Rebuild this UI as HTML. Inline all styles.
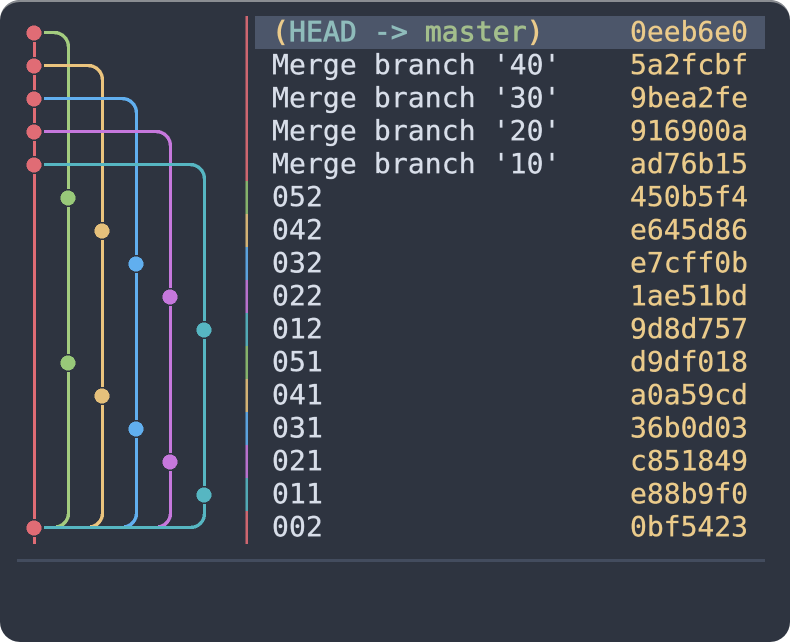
<!DOCTYPE html>
<html><head><meta charset="utf-8">
<style>
html,body{margin:0;padding:0;background:#fff;width:790px;height:642px;overflow:hidden}
#win{position:absolute;left:0;top:0;width:790px;height:642px;background:#2e3440;border-radius:20px;overflow:hidden}
#top{position:absolute;left:0;top:0;width:790px;height:642px;border-radius:20px;box-sizing:border-box;border-top:2px solid #8a8d92;}
#hl{position:absolute;left:255px;top:16px;width:510px;height:33px;background:#4c566a}
#div{position:absolute;left:17px;top:559px;width:748px;height:3px;background:#434c5e}
.r{position:absolute;left:272px;height:33px;margin-top:-1px;letter-spacing:.12px;font:28px/33px "DejaVu Sans Mono","Liberation Mono",monospace;color:#d8dee9;white-space:pre;-webkit-text-stroke:.3px currentColor}
.h{position:absolute;left:630px;height:33px;margin-top:-1px;font:28px/33px "DejaVu Sans Mono","Liberation Mono",monospace;color:#ebcb8b;white-space:pre;-webkit-text-stroke:.3px currentColor}
.b{-webkit-text-stroke:.8px currentColor}
svg{position:absolute;left:0;top:0}
</style></head><body>
<div id="win">
<div id="top"></div>
<div id="hl"></div>
<div id="div"></div>
<svg width="790" height="642" viewBox="0 0 790 642" fill="none" shape-rendering="crispEdges">
<g stroke-width="3.4">
<path d="M54 32.500A14.500 14.500 0 0 1 68.500 47M68.500 514A14 14 0 0 1 56 527" stroke="#a3cc7f"/>
<path d="M88 65.500A14.500 14.500 0 0 1 102.500 80M102.500 514A14 14 0 0 1 90 527" stroke="#ebc47e"/>
<path d="M122 98.500A14.500 14.500 0 0 1 136.500 113M136.500 514A14 14 0 0 1 124 527" stroke="#61afef"/>
<path d="M156 131.500A14.500 14.500 0 0 1 170.500 146M170.500 514A14 14 0 0 1 158 527" stroke="#c678dd"/>
<path d="M190 164.500A14.500 14.500 0 0 1 204.500 179M204.500 513A14 14 0 0 1 190.500 527.500" stroke="#56b6c2"/>
</g>
<g fill="#a3cc7f"><rect x="44" y="31" width="10" height="3"/><rect x="67" y="47" width="3" height="142"/><rect x="67" y="207" width="3" height="147"/><rect x="67" y="372" width="3" height="142"/></g>
<g fill="#ebc47e"><rect x="44" y="64" width="44" height="3"/><rect x="101" y="80" width="3" height="142"/><rect x="101" y="240" width="3" height="147"/><rect x="101" y="405" width="3" height="109"/></g>
<g fill="#61afef"><rect x="44" y="97" width="78" height="3"/><rect x="135" y="113" width="3" height="142"/><rect x="135" y="273" width="3" height="147"/><rect x="135" y="438" width="3" height="76"/></g>
<g fill="#c678dd"><rect x="44" y="130" width="112" height="3"/><rect x="169" y="146" width="3" height="142"/><rect x="169" y="306" width="3" height="147"/><rect x="169" y="471" width="3" height="43"/></g>
<g fill="#56b6c2"><rect x="44" y="163" width="146" height="3"/><rect x="203" y="179" width="3" height="142"/><rect x="203" y="339" width="3" height="147"/><rect x="203" y="504" width="3" height="9"/><rect x="44" y="526" width="147" height="3"/></g>
<g fill="#e06c75"><rect x="33" y="42" width="3" height="15"/><rect x="33" y="75" width="3" height="15"/><rect x="33" y="108" width="3" height="15"/><rect x="33" y="141" width="3" height="15"/><rect x="33" y="174" width="3" height="345"/><rect x="33" y="537" width="3" height="7"/></g>
<g fill="#e06c75"><circle cx="34" cy="33" r="7.500"/><circle cx="34" cy="66" r="7.500"/><circle cx="34" cy="99" r="7.500"/><circle cx="34" cy="132" r="7.500"/><circle cx="34" cy="165" r="7.500"/><circle cx="34" cy="528" r="7.500"/></g>
<g fill="#98c979"><circle cx="68" cy="198" r="7.500"/><circle cx="68" cy="363" r="7.500"/></g>
<g fill="#e5c07b"><circle cx="102" cy="231" r="7.500"/><circle cx="102" cy="396" r="7.500"/></g>
<g fill="#61afef"><circle cx="136" cy="264" r="7.500"/><circle cx="136" cy="429" r="7.500"/></g>
<g fill="#c678dd"><circle cx="170" cy="297" r="7.500"/><circle cx="170" cy="462" r="7.500"/></g>
<g fill="#56b6c2"><circle cx="204" cy="330" r="7.500"/><circle cx="204" cy="495" r="7.500"/></g>
<g opacity=".9" shape-rendering="auto">
<rect x="245.500" y="16" width="2.500" height="165" fill="#e06c75"/>
<rect x="245.500" y="181" width="2.500" height="33" fill="#8fc070"/>
<rect x="245.500" y="214" width="2.500" height="33" fill="#e5c07b"/>
<rect x="245.500" y="247" width="2.500" height="33" fill="#61afef"/>
<rect x="245.500" y="280" width="2.500" height="33" fill="#c678dd"/>
<rect x="245.500" y="313" width="2.500" height="33" fill="#56b6c2"/>
<rect x="245.500" y="346" width="2.500" height="33" fill="#8fc070"/>
<rect x="245.500" y="379" width="2.500" height="33" fill="#e5c07b"/>
<rect x="245.500" y="412" width="2.500" height="33" fill="#61afef"/>
<rect x="245.500" y="445" width="2.500" height="33" fill="#c678dd"/>
<rect x="245.500" y="478" width="2.500" height="33" fill="#56b6c2"/>
<rect x="245.500" y="511" width="2.500" height="33" fill="#e06c75"/>
</g>
</svg>
<div class="r b" style="top:16px"><span style="color:#ebcb8b">(</span><span style="color:#8fbcbb">HEAD -&gt; </span><span style="color:#a3be8c">master</span><span style="color:#ebcb8b">)</span></div><div class="h" style="top:16px">0eeb6e0</div>
<div class="r" style="top:49px">Merge branch '40'</div><div class="h" style="top:49px">5a2fcbf</div>
<div class="r" style="top:82px">Merge branch '30'</div><div class="h" style="top:82px">9bea2fe</div>
<div class="r" style="top:115px">Merge branch '20'</div><div class="h" style="top:115px">916900a</div>
<div class="r" style="top:148px">Merge branch '10'</div><div class="h" style="top:148px">ad76b15</div>
<div class="r" style="top:181px">052</div><div class="h" style="top:181px">450b5f4</div>
<div class="r" style="top:214px">042</div><div class="h" style="top:214px">e645d86</div>
<div class="r" style="top:247px">032</div><div class="h" style="top:247px">e7cff0b</div>
<div class="r" style="top:280px">022</div><div class="h" style="top:280px">1ae51bd</div>
<div class="r" style="top:313px">012</div><div class="h" style="top:313px">9d8d757</div>
<div class="r" style="top:346px">051</div><div class="h" style="top:346px">d9df018</div>
<div class="r" style="top:379px">041</div><div class="h" style="top:379px">a0a59cd</div>
<div class="r" style="top:412px">031</div><div class="h" style="top:412px">36b0d03</div>
<div class="r" style="top:445px">021</div><div class="h" style="top:445px">c851849</div>
<div class="r" style="top:478px">011</div><div class="h" style="top:478px">e88b9f0</div>
<div class="r" style="top:511px">002</div><div class="h" style="top:511px">0bf5423</div>
</div>
</body></html>
